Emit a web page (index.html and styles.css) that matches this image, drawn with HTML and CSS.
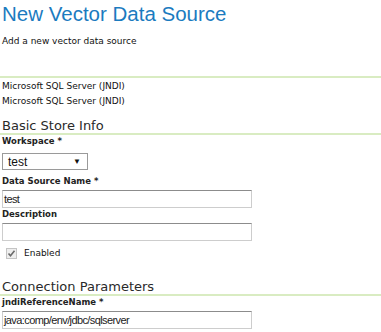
FILE: index.html
```html
<!DOCTYPE html>
<html lang="en">
<head>
    <meta charset="UTF-8">
    <title>New Vector Data Source</title>
    <link rel="stylesheet" href="styles.css">
</head>
<body>
    <div class="page">
        <h1>New Vector Data Source</h1>
        <p class="intro">Add a new vector data source</p>

        <div class="store-type">
            <div>Microsoft SQL Server (JNDI)</div>
            <div>Microsoft SQL Server (JNDI)</div>
        </div>

        <h2>Basic Store Info</h2>

        <div class="field">
            <label>Workspace *</label>
            <div class="select">
                <span>test</span>
                <span class="arrow">&#9660;</span>
            </div>
        </div>

        <div class="field">
            <label>Data Source Name *</label>
            <div class="input">test</div>
        </div>

        <div class="field">
            <label>Description</label>
            <div class="input"></div>
        </div>

        <div class="check">
            <span class="box">
                <svg width="9" height="9" viewBox="0 0 9 9"><path d="M1.5 4.5 L3.5 6.8 L7.5 1.8" fill="none" stroke="#6a6a6a" stroke-width="1.6"/></svg>
            </span>
            <span>Enabled</span>
        </div>

        <h2 class="params">Connection Parameters</h2>

        <div class="field">
            <label>jndiReferenceName *</label>
            <div class="input">java:comp/env/jdbc/sqlserver</div>
        </div>
    </div>
</body>
</html>
```

FILE: styles.css
```css
body {
    margin: 0;
    font-family: 'DejaVu Sans', Verdana, sans-serif;
    font-size: 9px;
    color: #111;
    background: #fff;
}

.page {
    padding: 0 2px;
}

h1 {
    margin: 0;
    padding-top: 1px;
    font-family: 'Liberation Sans', Arial, sans-serif;
    font-weight: normal;
    font-size: 20.5px;
    line-height: 26px;
    color: #1b7bbf;
}

.intro {
    margin: 7px 0 0 0;
    line-height: 14px;
}

.store-type {
    margin: 28px -2px 0 -2px;
    padding: 1px 2px 0 2px;
    border-top: 2px solid #d9ecc2;
    line-height: 15px;
}

h2 {
    margin: 9px -2px 0 -2px;
    padding: 0 2px;
    font-size: 13px;
    font-weight: normal;
    line-height: 15px;
    color: #2a2a2a;
    border-bottom: 2px solid #d9ecc2;
}

label {
    display: block;
    font-weight: bold;
    font-size: 8.5px;
    line-height: 12px;
    color: #222;
}

.select {
    box-sizing: border-box;
    display: flex;
    justify-content: space-between;
    align-items: center;
    width: 86px;
    height: 17px;
    margin: 6px 0 5px 0;
    padding: 0 6px 0 5px;
    border: 1px solid #9a9a9a;
    font-family: 'Liberation Sans', Arial, sans-serif;
    font-size: 12px;
}

.arrow {
    font-size: 8px;
}

.input {
    box-sizing: border-box;
    width: 250px;
    height: 18px;
    margin-top: 3px;
    padding: 1px 1px;
    border: 1px solid #cdcdcd;
    border-top-color: #8c8c8c;
    font-family: 'Liberation Sans', Arial, sans-serif;
    font-size: 11px;
    letter-spacing: -0.6px;
    line-height: 14px;
    color: #222;
}

.check {
    display: flex;
    align-items: center;
    gap: 7px;
    margin-top: 5px;
    padding-left: 4px;
    line-height: 14px;
}

.box {
    display: flex;
    align-items: center;
    justify-content: center;
    width: 9px;
    height: 9px;
    border: 1px solid #c4c4c4;
    background: #eee;
}

.params {
    margin-top: 19px;
}
```
